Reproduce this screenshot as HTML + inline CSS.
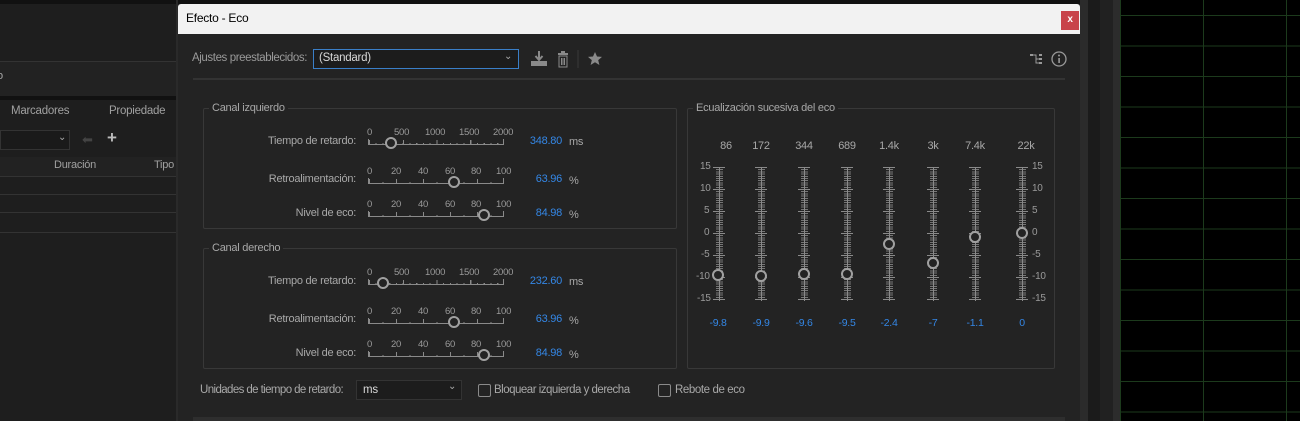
<!DOCTYPE html>
<html><head><meta charset="utf-8"><style>
*{margin:0;padding:0;box-sizing:border-box}
body{width:1300px;height:421px;background:#1e1e1e;position:relative;overflow:hidden;font-family:"Liberation Sans",sans-serif;font-size:11px;color:#a8a8a8;letter-spacing:-0.25px}
.a{position:absolute;white-space:nowrap}
.grid{position:absolute;left:1120px;top:0;width:180px;height:421px;background-color:#000;
background-image:repeating-linear-gradient(to bottom,transparent 0 15px,#1c3a1c 15px 16px,transparent 16px 30.5px),
repeating-linear-gradient(to right,#1c3a1c 0 1px,transparent 1px 83px);}
.box{position:absolute;border:1px solid #383838;border-radius:2px}
.ttl{position:absolute;top:-7px;left:5px;background:#232323;padding:0 3px;color:#a8a8a8}
.lbl{position:absolute;width:150px;text-align:right}
.trk{position:absolute;height:6px;border-bottom:1px solid #8a8a8a;border-left:1px solid #8a8a8a;border-right:1px solid #8a8a8a;background-repeat:no-repeat}
.scl{position:absolute;font-size:9.5px;color:#9a9a9a}
.knob{position:absolute;width:12px;height:12px;border:2px solid #a0a0a0;border-radius:50%;background:#232323}
.val{position:absolute;color:#3487e6;text-align:right;width:60px}
.eq{position:absolute;width:12px;height:134px;background:
linear-gradient(#8a8a8a,#8a8a8a) center/1px 100% no-repeat,
repeating-linear-gradient(to bottom,#8a8a8a 0 1px,transparent 1px 22px) center/12px 100% no-repeat,
repeating-linear-gradient(to bottom,#777 0 1px,transparent 1px 2.2px) center/7px 100% no-repeat}
.eql{position:absolute;font-size:10px;color:#9a9a9a}
.fl{position:absolute;width:40px;text-align:center;color:#a8a8a8}
.ev{position:absolute;width:40px;text-align:center;color:#3487e6;font-size:10.5px}
.cb{position:absolute;width:13px;height:13px;border:1px solid #8a8a8a;border-radius:2px}
</style></head><body>
<div class="a" style="left:0;top:0;width:178px;height:4px;background:#111"></div>
<div class="a" style="left:0;top:61px;width:178px;height:1px;background:#333"></div>
<div class="a" style="left:0;top:62px;width:178px;height:35px;background:#222"></div>
<div class="a" style="left:-3px;top:70px;color:#aaa">o</div>
<div class="a" style="left:0;top:96px;width:178px;height:4px;background:#111"></div>
<div class="a" style="left:11px;top:105px;color:#a0a0a0;font-size:11.5px">Marcadores</div>
<div class="a" style="left:109px;top:105px;color:#a0a0a0;font-size:11.5px">Propiedade</div>
<div class="a" style="left:0;top:130px;width:70px;height:20px;background:#1a1a1a;border:1px solid #333"></div>
<div class="a" style="left:58px;top:132px;color:#aaa;font-size:10px">⌄</div>
<div class="a" style="left:82px;top:132px;color:#444;font-size:13px">⬅</div>
<div class="a" style="left:107px;top:128px;color:#bbb;font-size:17px;font-weight:bold">+</div>
<div class="a" style="left:0;top:157px;width:178px;height:19px;background:#222"></div>
<div class="a" style="left:54px;top:159px;color:#a0a0a0">Duración</div>
<div class="a" style="left:154px;top:159px;color:#a0a0a0">Tipo</div>
<div class="a" style="left:0;top:176px;width:178px;height:1px;background:#333"></div>
<div class="a" style="left:0;top:194px;width:178px;height:1px;background:#333"></div>
<div class="a" style="left:0;top:212px;width:178px;height:1px;background:#333"></div>
<div class="a" style="left:0;top:232px;width:178px;height:1px;background:#333"></div>
<div class="a" style="left:176px;top:0;width:2px;height:421px;background:#2a2a2a"></div>
<div class="a" style="left:178px;top:0;width:910px;height:4px;background:#111"></div>
<div class="a" style="left:1080px;top:0;width:8px;height:421px;background:#2b2b2b"></div>
<div class="a" style="left:1088px;top:0;width:12px;height:421px;background:#1b1b1b"></div>
<div class="a" style="left:1100px;top:0;width:13px;height:421px;background:#212121"></div>
<div class="a" style="left:1113px;top:0;width:7px;height:421px;background:#2c2c2c"></div>
<div class="grid"></div>
<div class="a" style="left:178px;top:4px;width:902px;height:30px;background:#f2f2f2;border-radius:3px 3px 0 0"></div>
<div class="a" style="left:186px;top:11px;color:#000;font-size:12px">Efecto - Eco</div>
<div class="a" style="left:1061px;top:11px;width:18px;height:19px;background:#c8434a;color:#fff;font-size:10px;text-align:center;line-height:18px;font-weight:bold">x</div>
<div class="a" style="left:178px;top:34px;width:902px;height:387px;background:#232323"></div>
<div class="a" style="left:192px;top:52px;color:#9a9a9a;font-size:11.5px;letter-spacing:-0.4px">Ajustes preestablecidos:</div>
<div class="a" style="left:313px;top:49px;width:206px;height:20px;border:1px solid #3a7fc8;background:#1c1c1c"></div>
<div class="a" style="left:319px;top:52px;color:#d8d8d8;font-size:11.5px">(Standard)</div>
<div class="a" style="left:504px;top:51px;color:#aaa;font-size:10px">⌄</div>
<svg class="a" style="left:530px;top:50px" width="80" height="18">
<path d="M9 1v8M5.5 6l3.5 4 3.5-4" stroke="#8a8a8a" stroke-width="2" fill="none"/>
<rect x="1" y="11" width="16" height="5" fill="#8a8a8a"/>
<rect x="28" y="3" width="10" height="2" fill="#8a8a8a"/><rect x="31" y="1" width="4" height="2" fill="#8a8a8a"/>
<rect x="29" y="6" width="8" height="11" fill="none" stroke="#8a8a8a"/>
<path d="M31.5 8v7M33 8v7M34.5 8v7" stroke="#8a8a8a"/>
<line x1="48" y1="0" x2="48" y2="18" stroke="#3a3a3a"/>
<path d="M65 2l2 4.5 5 .4-3.8 3.2 1.2 4.9-4.4-2.7-4.4 2.7 1.2-4.9-3.8-3.2 5-.4z" fill="#8a8a8a"/>
</svg>
<svg class="a" style="left:1028px;top:50px" width="42" height="18">
<rect x="2" y="4" width="3" height="2" fill="#999"/><path d="M5 5h3v8h4M8 9h4" stroke="#999" fill="none"/>
<rect x="11" y="4" width="3" height="2" fill="#999"/><rect x="11" y="8" width="3" height="2" fill="#999"/><rect x="11" y="12" width="3" height="2" fill="#999"/>
<circle cx="31" cy="9" r="7" fill="none" stroke="#999" stroke-width="1.3"/>
<rect x="30.3" y="8" width="1.6" height="5" fill="#999"/><circle cx="31" cy="5.5" r="1" fill="#999"/>
</svg>
<div class="a" style="left:193px;top:78px;width:872px;height:2px;background:#333"></div>

<div class="box" style="left:203px;top:108px;width:474px;height:121px"><span class="ttl">Canal izquierdo</span></div>
<div class="box" style="left:203px;top:248px;width:474px;height:121px"><span class="ttl">Canal derecho</span></div>
<div class="box" style="left:687px;top:108px;width:368px;height:261px"><span class="ttl">Ecualización sucesiva del eco</span></div>

<div class="lbl" style="left:206px;top:135px">Tiempo de retardo:</div>
<div class="scl" style="left:367px;top:127px">0</div><div class="scl" style="left:394px;top:127px">500</div><div class="scl" style="left:425px;top:127px">1000</div><div class="scl" style="left:459px;top:127px">1500</div><div class="scl" style="left:493px;top:127px">2000</div>
<div class="trk" style="left:368px;top:139px;width:136px;background:repeating-linear-gradient(to right,#8a8a8a 0 1px,transparent 1px 6.75px) 0 4px/100% 2px no-repeat,repeating-linear-gradient(to right,#8a8a8a 0 1px,transparent 1px 33.75px) 0 1px/100% 5px no-repeat"></div>
<div class="knob" style="left:385px;top:137px"></div>
<div class="val" style="left:502px;top:135px">348.80</div><div class="a" style="left:569px;top:136px">ms</div>

<div class="lbl" style="left:206px;top:173px">Retroalimentación:</div>
<div class="scl" style="left:367px;top:166px">0</div><div class="scl" style="left:391px;top:166px">20</div><div class="scl" style="left:418px;top:166px">40</div><div class="scl" style="left:445px;top:166px">60</div><div class="scl" style="left:471px;top:166px">80</div><div class="scl" style="left:496px;top:166px">100</div>
<div class="trk" style="left:368px;top:178px;width:136px;background:repeating-linear-gradient(to right,#8a8a8a 0 1px,transparent 1px 13.5px) 0 4px/100% 2px no-repeat,repeating-linear-gradient(to right,#8a8a8a 0 1px,transparent 1px 27px) 0 1px/100% 5px no-repeat"></div>
<div class="knob" style="left:448px;top:176px"></div>
<div class="val" style="left:502px;top:173px">63.96</div><div class="a" style="left:569px;top:175px">%</div>

<div class="lbl" style="left:206px;top:207px">Nivel de eco:</div>
<div class="scl" style="left:367px;top:199px">0</div><div class="scl" style="left:391px;top:199px">20</div><div class="scl" style="left:418px;top:199px">40</div><div class="scl" style="left:445px;top:199px">60</div><div class="scl" style="left:471px;top:199px">80</div><div class="scl" style="left:496px;top:199px">100</div>
<div class="trk" style="left:368px;top:211px;width:136px;background:repeating-linear-gradient(to right,#8a8a8a 0 1px,transparent 1px 13.5px) 0 4px/100% 2px no-repeat,repeating-linear-gradient(to right,#8a8a8a 0 1px,transparent 1px 27px) 0 1px/100% 5px no-repeat"></div>
<div class="knob" style="left:478px;top:209px"></div>
<div class="val" style="left:502px;top:207px">84.98</div><div class="a" style="left:569px;top:209px">%</div>

<div class="lbl" style="left:206px;top:275px">Tiempo de retardo:</div>
<div class="scl" style="left:367px;top:267px">0</div><div class="scl" style="left:394px;top:267px">500</div><div class="scl" style="left:425px;top:267px">1000</div><div class="scl" style="left:459px;top:267px">1500</div><div class="scl" style="left:493px;top:267px">2000</div>
<div class="trk" style="left:368px;top:279px;width:136px;background:repeating-linear-gradient(to right,#8a8a8a 0 1px,transparent 1px 6.75px) 0 4px/100% 2px no-repeat,repeating-linear-gradient(to right,#8a8a8a 0 1px,transparent 1px 33.75px) 0 1px/100% 5px no-repeat"></div>
<div class="knob" style="left:377px;top:277px"></div>
<div class="val" style="left:502px;top:275px">232.60</div><div class="a" style="left:569px;top:276px">ms</div>

<div class="lbl" style="left:206px;top:313px">Retroalimentación:</div>
<div class="scl" style="left:367px;top:306px">0</div><div class="scl" style="left:391px;top:306px">20</div><div class="scl" style="left:418px;top:306px">40</div><div class="scl" style="left:445px;top:306px">60</div><div class="scl" style="left:471px;top:306px">80</div><div class="scl" style="left:496px;top:306px">100</div>
<div class="trk" style="left:368px;top:318px;width:136px;background:repeating-linear-gradient(to right,#8a8a8a 0 1px,transparent 1px 13.5px) 0 4px/100% 2px no-repeat,repeating-linear-gradient(to right,#8a8a8a 0 1px,transparent 1px 27px) 0 1px/100% 5px no-repeat"></div>
<div class="knob" style="left:448px;top:316px"></div>
<div class="val" style="left:502px;top:313px">63.96</div><div class="a" style="left:569px;top:315px">%</div>

<div class="lbl" style="left:206px;top:347px">Nivel de eco:</div>
<div class="scl" style="left:367px;top:339px">0</div><div class="scl" style="left:391px;top:339px">20</div><div class="scl" style="left:418px;top:339px">40</div><div class="scl" style="left:445px;top:339px">60</div><div class="scl" style="left:471px;top:339px">80</div><div class="scl" style="left:496px;top:339px">100</div>
<div class="trk" style="left:368px;top:351px;width:136px;background:repeating-linear-gradient(to right,#8a8a8a 0 1px,transparent 1px 13.5px) 0 4px/100% 2px no-repeat,repeating-linear-gradient(to right,#8a8a8a 0 1px,transparent 1px 27px) 0 1px/100% 5px no-repeat"></div>
<div class="knob" style="left:478px;top:349px"></div>
<div class="val" style="left:502px;top:347px">84.98</div><div class="a" style="left:569px;top:349px">%</div>

<div class="fl" style="left:706px;top:140px">86</div>
<div class="fl" style="left:741px;top:140px">172</div>
<div class="fl" style="left:784px;top:140px">344</div>
<div class="fl" style="left:827px;top:140px">689</div>
<div class="fl" style="left:869px;top:140px">1.4k</div>
<div class="fl" style="left:913px;top:140px">3k</div>
<div class="fl" style="left:955px;top:140px">7.4k</div>
<div class="fl" style="left:1006px;top:140px">22k</div>

<div class="eq" style="left:713px;top:167px"></div>
<div class="eq" style="left:755px;top:167px"></div>
<div class="eq" style="left:798px;top:167px"></div>
<div class="eq" style="left:841px;top:167px"></div>
<div class="eq" style="left:883px;top:167px"></div>
<div class="eq" style="left:927px;top:167px"></div>
<div class="eq" style="left:969px;top:167px"></div>
<div class="eq" style="left:1016px;top:167px"></div>

<div class="eql" style="left:700px;top:161px">15</div><div class="eql" style="left:700px;top:183px">10</div><div class="eql" style="left:704px;top:205px">5</div><div class="eql" style="left:704px;top:227px">0</div><div class="eql" style="left:701px;top:249px">-5</div><div class="eql" style="left:696px;top:271px">-10</div><div class="eql" style="left:697px;top:293px">-15</div>
<div class="eql" style="left:1032px;top:161px">15</div><div class="eql" style="left:1032px;top:183px">10</div><div class="eql" style="left:1032px;top:205px">5</div><div class="eql" style="left:1032px;top:227px">0</div><div class="eql" style="left:1032px;top:249px">-5</div><div class="eql" style="left:1032px;top:271px">-10</div><div class="eql" style="left:1032px;top:293px">-15</div>

<div class="knob" style="left:712px;top:269px"></div>
<div class="knob" style="left:755px;top:270px"></div>
<div class="knob" style="left:798px;top:268px"></div>
<div class="knob" style="left:841px;top:268px"></div>
<div class="knob" style="left:883px;top:238px"></div>
<div class="knob" style="left:927px;top:257px"></div>
<div class="knob" style="left:969px;top:231px"></div>
<div class="knob" style="left:1016px;top:227px"></div>

<div class="ev" style="left:698px;top:317px">-9.8</div>
<div class="ev" style="left:741px;top:317px">-9.9</div>
<div class="ev" style="left:784px;top:317px">-9.6</div>
<div class="ev" style="left:827px;top:317px">-9.5</div>
<div class="ev" style="left:869px;top:317px">-2.4</div>
<div class="ev" style="left:913px;top:317px">-7</div>
<div class="ev" style="left:955px;top:317px">-1.1</div>
<div class="ev" style="left:1002px;top:317px">0</div>

<div class="a" style="left:200px;top:384px;color:#a8a8a8;font-size:11.5px;letter-spacing:-0.6px">Unidades de tiempo de retardo:</div>
<div class="a" style="left:356px;top:380px;width:106px;height:20px;border:1px solid #333;background:#1c1c1c"></div>
<div class="a" style="left:363px;top:384px;color:#d8d8d8;font-size:11.5px">ms</div>
<div class="a" style="left:448px;top:381px;color:#aaa;font-size:10px">⌄</div>
<div class="cb" style="left:478px;top:384px"></div>
<div class="a" style="left:494px;top:384px;font-size:11.5px;letter-spacing:-0.5px">Bloquear izquierda y derecha</div>
<div class="cb" style="left:658px;top:384px"></div>
<div class="a" style="left:675px;top:384px;font-size:11.5px;letter-spacing:-0.4px">Rebote de eco</div>
<div class="a" style="left:193px;top:417px;width:872px;height:4px;background:#2e2e2e"></div>
</body></html>
